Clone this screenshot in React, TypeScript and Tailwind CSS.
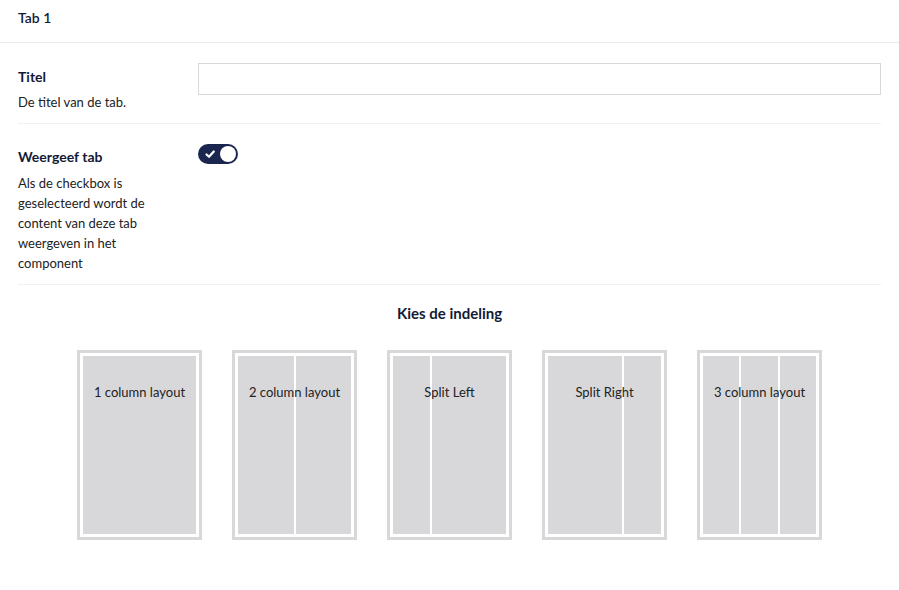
import React from "react";

type Layout = { label: string; cols: number[] };

const layouts: Layout[] = [
  { label: "1 column layout", cols: [1] },
  { label: "2 column layout", cols: [1, 1] },
  { label: "Split Left", cols: [1, 2] },
  { label: "Split Right", cols: [2, 1] },
  { label: "3 column layout", cols: [1, 1, 1] },
];

function Toggle() {
  return (
    <button
      type="button"
      className="relative flex h-[20px] w-[40px] items-center rounded-full bg-[#1b264f]"
    >
      <svg
        viewBox="0 0 12 12"
        className="absolute left-[6px] top-[4px] h-[12px] w-[12px]"
        fill="none"
        stroke="white"
        strokeWidth="2.2"
        strokeLinecap="round"
        strokeLinejoin="round"
      >
        <path d="M2.5 6.5 L5 8.8 L9.8 3.5" />
      </svg>
      <span className="absolute right-[2px] top-[2px] h-[16px] w-[16px] rounded-full bg-white" />
    </button>
  );
}

function LayoutCard({ layout }: { layout: Layout }) {
  return (
    <div className="relative h-[190px] w-[125px] border-[3px] border-[#d8d8d8] bg-white p-[3px]">
      <div className="flex h-full gap-[2px]">
        {layout.cols.map((c, i) => (
          <div
            key={i}
            className="h-full bg-[#d8d8da]"
            style={{ flexGrow: c, flexBasis: 0 }}
          />
        ))}
      </div>
      <div className="absolute inset-x-0 top-[29px] text-center text-[13px] leading-[20px] text-[#222]">
        {layout.label}
      </div>
    </div>
  );
}

export default function App() {
  return (
    <div
      className="min-h-[590px] w-full bg-white text-[#131a36]"
      style={{ fontFamily: "Lato, 'Open Sans', sans-serif" }}
    >
      <div className="h-[43px] border-b border-[#e9e9eb] px-[18px] pt-[8px] text-[14px] font-semibold leading-[20px]">
        Tab 1
      </div>

      <div className="px-[18px]">
        <div className="flex border-b border-[#f0f0f2] pb-[11px] pt-[20px]">
          <div className="w-[180px] shrink-0 pr-[20px]">
            <div className="mt-[4px] text-[14px] font-bold leading-[20px]">Titel</div>
            <div className="mt-[5px] text-[13px] leading-[20px] text-[#222]">
              De titel van de tab.
            </div>
          </div>
          <div className="flex-1">
            <input
              type="text"
              className="h-[32px] w-full border border-[#d8d7d9] bg-white px-[8px] text-[14px] outline-none"
            />
          </div>
        </div>

        <div className="flex border-b border-[#f0f0f2] pb-[11px] pt-[20px]">
          <div className="w-[180px] shrink-0 pr-[20px]">
            <div className="mt-[3px] text-[14px] font-bold leading-[20px]">Weergeef tab</div>
            <div className="mt-[6px] text-[13px] leading-[20px] text-[#222]">
              Als de checkbox is geselecteerd wordt de content van deze tab weergeven in het
              component
            </div>
          </div>
          <div className="flex-1">
            <Toggle />
          </div>
        </div>

        <div className="mt-[18px] text-center text-[15px] font-bold leading-[20px]">
          Kies de indeling
        </div>

        <div className="mt-[27px] flex justify-center gap-[30px]">
          {layouts.map((l) => (
            <LayoutCard key={l.label} layout={l} />
          ))}
        </div>
      </div>
    </div>
  );
}
